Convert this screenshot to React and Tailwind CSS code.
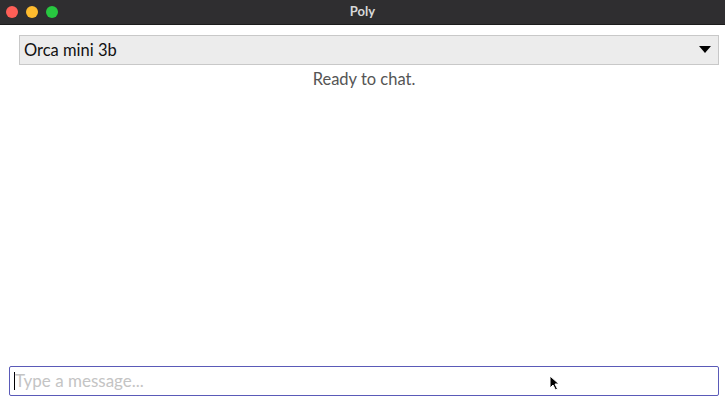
export default function App() {
  return (
    <div className="relative w-[725px] h-[401px] bg-white flex flex-col overflow-hidden" style={{ fontFamily: "Lato, 'Open Sans', sans-serif" }}>
      <div className="h-[25px] bg-[#2f2e30] flex items-center px-[6px] relative border-b border-[#1c1c1c]">
        <div className="flex gap-[8px]">
          <span className="w-[12px] h-[12px] rounded-full bg-[#fe5f57]" />
          <span className="w-[12px] h-[12px] rounded-full bg-[#febc2e]" />
          <span className="w-[12px] h-[12px] rounded-full bg-[#28c840]" />
        </div>
        <div className="absolute inset-0 flex items-center justify-center text-[13px] font-bold text-[#d8d8d8]">Poly</div>
      </div>
      <div className="flex-1 flex flex-col pl-[9px] pr-[6px] pb-[5px]">
        <div className="mt-[10px] ml-[10px] h-[30px] bg-[#ececec] border border-[#c8c8c8] flex items-center justify-between pl-[4px] pr-[7px]">
          <span className="text-[16.5px] text-[#111]">Orca mini 3b</span>
          <svg width="12" height="8" viewBox="0 0 12 8"><path d="M0 0 L12 0 L6 7 Z" fill="#000" /></svg>
        </div>
        <div className="text-center text-[16.5px] text-[#555] mt-[2px]">Ready to chat.</div>
        <div className="flex-1" />
        <div className="h-[30px] border border-[#5a5ab8] rounded-[2px] flex items-center pl-[4px]">
          <span className="w-[1px] h-[18px] bg-black" />
          <span className="text-[17px] text-[#c4c4c4]">Type a message...</span>
        </div>
      </div>
      <svg className="absolute left-[549px] top-[375px]" width="11" height="16" viewBox="0 0 11 16">
        <path d="M1 1 L1 13 L4 10 L6.5 15 L8.5 14 L6 9 L10 9 Z" fill="#000" stroke="#fff" strokeWidth="1" />
      </svg>
    </div>
  );
}
